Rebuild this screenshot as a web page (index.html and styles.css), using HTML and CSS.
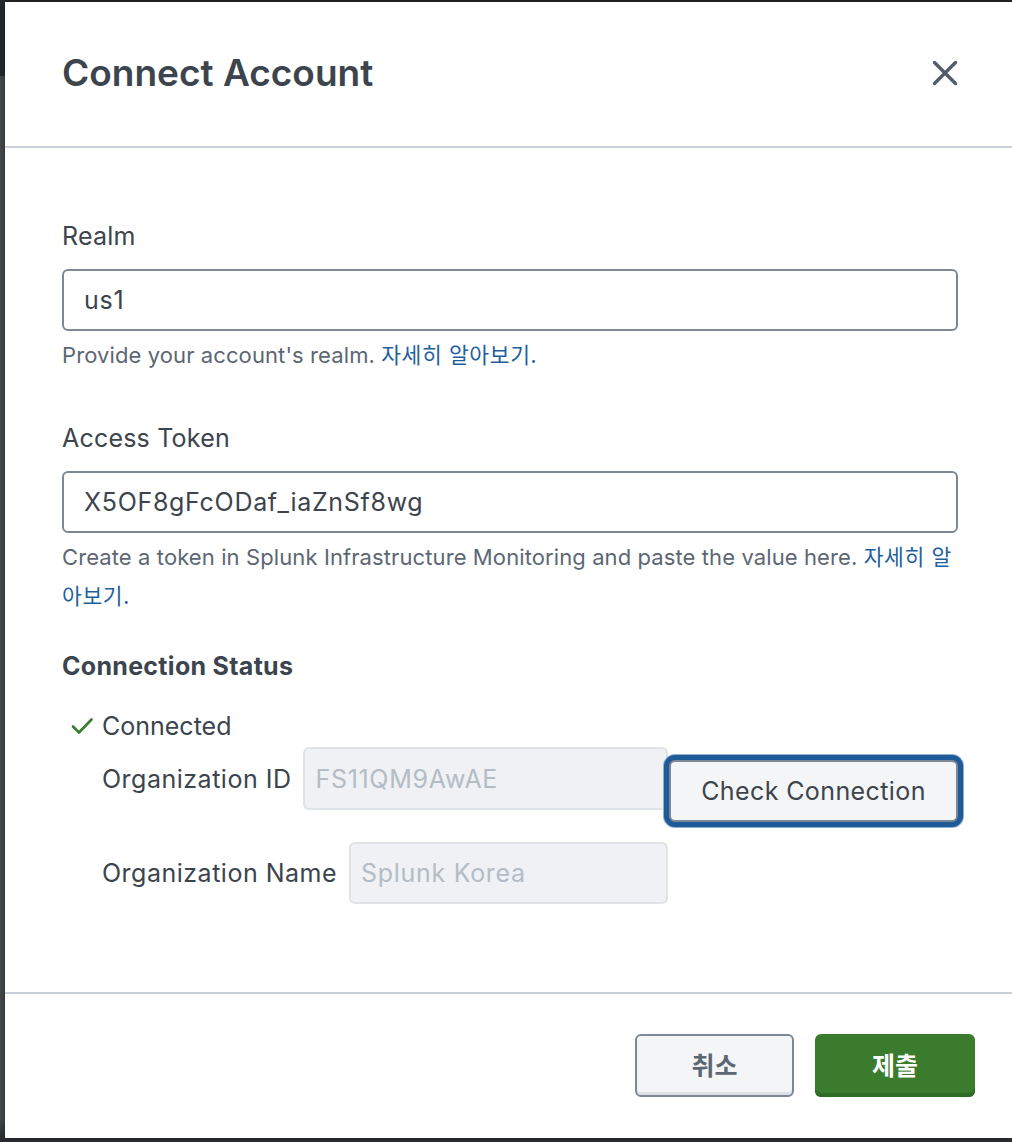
FILE: index.html
```html
<!DOCTYPE html>
<html lang="ko">
<head>
<meta charset="utf-8">
<title>Connect Account</title>
<link rel="stylesheet" href="styles.css">
</head>
<body>
<div class="modal">
  <header class="modal-header">
    <h1 class="modal-title">Connect Account</h1>
    <button class="close-btn" aria-label="Close">
      <svg width="26" height="26" viewBox="0 0 26 26"><path d="M2.5 2.5 L23.5 23.5 M23.5 2.5 L2.5 23.5" stroke="#535d69" stroke-width="3.4" stroke-linecap="round" fill="none"/></svg>
    </button>
  </header>
  <main class="modal-body">
    <div class="field">
      <label class="field-label">Realm</label>
      <input class="text-input" type="text" value="us1">
      <p class="help">Provide your account's realm. <a class="link" href="#">자세히 알아보기.</a></p>
    </div>
    <div class="field">
      <label class="field-label">Access Token</label>
      <input class="text-input" type="text" value="X5OF8gFcODaf_iaZnSf8wg">
      <p class="help">Create a token in Splunk Infrastructure Monitoring and paste the value here. <a class="link" href="#">자세히 알아보기.</a></p>
    </div>
    <section class="status">
      <h2 class="status-title">Connection Status</h2>
      <div class="status-line">
        <svg class="check" width="22" height="18" viewBox="0 0 22 18"><path d="M2 9.5 L8 15.5 L20.5 2.5" stroke="#3b7d2e" stroke-width="2.6" fill="none" stroke-linecap="round" stroke-linejoin="round"/></svg>
        <span>Connected</span>
      </div>
      <div class="org-grid">
        <div class="org-fields">
          <div class="org-row">
            <span class="org-label">Organization ID</span>
            <input class="ro-input tall" type="text" readonly placeholder="FS11QM9AwAE">
          </div>
          <div class="org-row">
            <span class="org-label">Organization Name</span>
            <input class="ro-input" type="text" readonly placeholder="Splunk Korea">
          </div>
        </div>
        <button class="check-btn">Check Connection</button>
      </div>
    </section>
  </main>
  <footer class="modal-footer">
    <button class="btn btn-cancel">취소</button>
    <button class="btn btn-submit">제출</button>
  </footer>
</div>
</body>
</html>
```
FILE: styles.css
```css
* { box-sizing: border-box; }

html, body { height: 100%; }

body {
  margin: 0;
  padding: 2px 0 4px 5px;
  background: linear-gradient(to bottom, #26292c 0, #26292c 76px, #45494d 76px, #45494d 1120px, #2c2f33 1138px);
  font-family: Inter, "Noto Sans CJK KR", sans-serif;
  color: #3c444d;
}

.modal {
  width: 1007px;
  height: 1136px;
  background: #fff;
  display: flex;
  flex-direction: column;
  box-shadow: 0 0 6px rgba(0, 0, 0, 0.45);
}

.modal-header {
  height: 146px;
  flex: none;
  display: flex;
  align-items: center;
  justify-content: space-between;
  padding: 0 54px 0 57px;
  border-bottom: 2px solid #c9d0d7;
}

.modal-title {
  margin: 0 0 2px;
  font-size: 37px;
  font-weight: 600;
  line-height: 46px;
  color: #3c444d;
}

.close-btn {
  border: 0;
  background: none;
  padding: 0;
  width: 26px;
  height: 26px;
  display: flex;
  margin-top: -2px;
  cursor: pointer;
}

.modal-body {
  flex: 1;
  padding: 72px 54px 0 57px;
}

.field { margin-bottom: 48px; }

.field-label {
  display: block;
  font-size: 25px;
  line-height: 32px;
  margin-bottom: 17px;
  color: #3c444d;
  letter-spacing: 0.2px;
}

.text-input {
  display: block;
  width: 100%;
  height: 62px;
  border: 2px solid #7d8894;
  border-radius: 6px;
  padding: 0 20px;
  font-family: Inter, "Noto Sans CJK KR", sans-serif;
  font-size: 25px;
  letter-spacing: 0.7px;
  color: #3c444d;
  background: #fff;
  outline: none;
}

.help {
  margin: 4px 0 0;
  font-size: 22px;
  line-height: 38px;
  letter-spacing: 0.1px;
  color: #5c6773;
}

.link {
  color: #1f5fa0;
  text-decoration: none;
  font-family: "Noto Sans CJK KR", Inter, sans-serif;
  font-size: 21.5px;
  letter-spacing: 0.6px;
}

.status { margin-top: -13px; }

.status-title {
  margin: 0;
  font-size: 25px;
  line-height: 32px;
  font-weight: 700;
  letter-spacing: 0.3px;
  color: #3c444d;
}

.status-line {
  display: flex;
  align-items: center;
  margin-top: 28px;
  padding-left: 9px;
  height: 32px;
  font-size: 25px;
}

.check { margin-right: 9px; flex: none; }

.org-grid {
  display: flex;
  align-items: flex-start;
  margin-top: 5px;
  padding-left: 40px;
}

.org-fields {
  width: 566px;
  display: flex;
  flex-direction: column;
  gap: 32px;
}

.org-row {
  display: flex;
  align-items: center;
  gap: 12px;
}

.org-label {
  font-size: 25px;
  letter-spacing: 0.5px;
  white-space: nowrap;
  color: #3c444d;
}

.ro-input {
  flex: 1;
  min-width: 0;
  height: 62px;
  border: 2px solid #dfe3e8;
  border-radius: 6px;
  background: #eff1f4;
  padding: 0 10px;
  font-family: Inter, sans-serif;
  font-size: 25px;
  letter-spacing: 0.7px;
  color: #b4bcc5;
  outline: none;
}

.ro-input.tall { height: 63px; }

.ro-input::placeholder { color: #b4bcc5; opacity: 1; }

.check-btn {
  margin-top: 13px;
  margin-left: 1px;
  width: 289px;
  height: 62px;
  border: 2px solid #7d8894;
  border-radius: 6px;
  background: #f4f5f7;
  box-shadow: 0 0 0 5px #1f5b98, 0 0 0 6px #8fb0d2;
  font-family: Inter, sans-serif;
  font-size: 25px;
  letter-spacing: 0.4px;
  color: #3c444d;
  cursor: pointer;
}

.modal-footer {
  flex: none;
  border-top: 2px solid #c9d0d7;
  display: flex;
  justify-content: flex-end;
  gap: 21px;
  padding: 40px 37px 41px 0;
}

.btn {
  width: 159px;
  height: 63px;
  border-radius: 6px;
  padding: 0 0 4px;
  font-family: "Noto Sans CJK KR", sans-serif;
  font-size: 25px;
  font-weight: 700;
  cursor: pointer;
}

.btn-cancel {
  background: #f4f5f7;
  border: 2px solid #7d8894;
  box-shadow: inset 0 -3px 0 #dde1e6;
  color: #5c6773;
}

.btn-submit {
  width: 160px;
  border: 0;
  background: #3a7b2e;
  box-shadow: inset 0 -4px 0 #2f6c25;
  color: #fff;
}
```
